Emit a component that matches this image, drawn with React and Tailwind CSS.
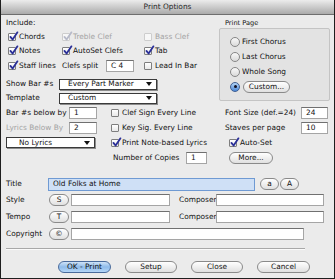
import React from "react";

function Box({ checked = false, disabled = false }) {
  return (
    <span
      className={
        disabled
          ? "relative w-[8px] h-[8px] shrink-0 rounded-[1px] border border-[#cdcdcd] bg-[#f7f7f7]"
          : "relative w-[8px] h-[8px] shrink-0 rounded-[1px] border border-[#7e7e7e] bg-gradient-to-b from-white to-[#e9e9e9]"
      }
    >
      {checked && (
        <svg viewBox="0 0 10 10" className="absolute left-[0px] top-[-2px] w-[9px] h-[9px] overflow-visible">
          <path
            d="M1.6 5.4 L4 8.4 L9.4 0.4"
            fill="none"
            stroke={disabled ? "#b7bac9" : "#2a2f98"}
            strokeWidth="2"
            strokeLinecap="round"
            strokeLinejoin="round"
          />
        </svg>
      )}
    </span>
  );
}

function CheckItem({ label, checked, disabled, className = "" }) {
  return (
    <div className={`flex items-center gap-[3px] whitespace-nowrap ${className}`}>
      <Box checked={checked} disabled={disabled} />
      <span className={disabled ? "text-[#a3a3a3]" : ""}>{label}</span>
    </div>
  );
}

function Radio({ checked = false }) {
  return checked ? (
    <span className="w-[10px] h-[10px] shrink-0 rounded-full border border-[#3f5f92] bg-gradient-to-b from-[#b3d4f6] to-[#4c88d6] flex items-center justify-center">
      <span className="w-[3px] h-[3px] rounded-full bg-[#101020]" />
    </span>
  ) : (
    <span className="w-[10px] h-[10px] shrink-0 rounded-full border border-[#868686] bg-gradient-to-b from-[#f8f8f8] to-[#dadada]" />
  );
}

function Field({ value = "", className = "" }) {
  return (
    <div className={`h-[12px] shrink-0 bg-white border border-[#a5a5a5] border-t-[#707070] flex items-center pl-[4px] ${className}`}>
      {value}
    </div>
  );
}

function Select({ value, className = "" }) {
  return (
    <div className={`h-[11px] shrink-0 bg-white border border-[#3a3a3a] shadow-[1px_1px_0_#8c8c8c] flex items-center justify-between pl-[8px] pr-[4px] ${className}`}>
      <span>{value}</span>
      <svg viewBox="0 0 6 4" className="w-[6px] h-[4px]">
        <path d="M0 0H6L3 4Z" fill="#111" />
      </svg>
    </div>
  );
}

function Pill({ children, blue = false, className = "" }) {
  return (
    <div
      className={`${
        blue
          ? "bg-gradient-to-b from-[#cfe3f8] via-[#8fbbea] to-[#b4d6f8] border-[#4a6b9c]"
          : "bg-gradient-to-b from-white to-[#e0e0e0] border-[#8a8a8a]"
      } h-[12px] shrink-0 rounded-full border flex items-center justify-center ${className}`}
    >
      {children}
    </div>
  );
}

export default function App() {
  return (
    <div className="w-[335px] h-[279px] flex flex-col bg-[#ebebeb] border-x border-b border-[#1e1e1e] overflow-hidden font-['DejaVu_Sans',sans-serif] text-[7.4px] leading-none text-[#111]">
      <div className="h-[15px] shrink-0 flex items-center justify-center bg-gradient-to-b from-[#ececec] to-[#ababab] border-b border-[#6e6e6e] text-[7.4px] text-[#262626]">
        Print Options
      </div>

      {/* top block */}
      <div className="flex">
        <div className="w-[218px] shrink-0 pl-[5px]">
          <div className="h-[15px] flex items-center">Include:</div>
          <div className="pl-[2px]">
            <div className="h-[13px] flex items-center">
              <CheckItem label="Chords" checked className="w-[54px]" />
              <CheckItem label="Treble Clef" checked disabled className="w-[82px]" />
              <CheckItem label="Bass Clef" disabled />
            </div>
            <div className="h-[15px] flex items-center">
              <CheckItem label="Notes" checked className="w-[54px]" />
              <CheckItem label="AutoSet Clefs" checked className="w-[82px]" />
              <CheckItem label="Tab" checked />
            </div>
            <div className="h-[15px] flex items-center">
              <CheckItem label="Staff lines" checked className="w-[54px]" />
              <div className="w-[82px] flex items-center">
                <span className="w-[44px]">Clefs split</span>
                <Field value="C 4" className="w-[28px]" />
              </div>
              <CheckItem label="Lead In Bar" />
            </div>
          </div>
          <div className="h-[4px]" />
          <div className="h-[14px] flex items-center">
            <span className="w-[53px]">Show Bar #s</span>
            <Select value="Every Part Marker" className="w-[98px]" />
          </div>
          <div className="h-[14px] flex items-center">
            <span className="w-[53px]">Template</span>
            <Select value="Custom" className="w-[98px]" />
          </div>
        </div>

        <div className="flex-1 pr-[4px] pt-[3px]">
          <div className="h-[10px] flex items-center pl-[6px] text-[6.6px]">Print Page</div>
          <div className="border border-[#c4c4c4] rounded-[2px] bg-[#e3e3e3] pl-[10px] pt-[5px] pb-[6px]">
            <div className="h-[15px] flex items-center gap-[2px]">
              <Radio />
              <span>First Chorus</span>
            </div>
            <div className="h-[15px] flex items-center gap-[2px]">
              <Radio />
              <span>Last Chorus</span>
            </div>
            <div className="h-[15px] flex items-center gap-[2px]">
              <Radio />
              <span>Whole Song</span>
            </div>
            <div className="h-[15px] flex items-center gap-[3px]">
              <Radio checked />
              <Pill className="w-[47px]">Custom...</Pill>
            </div>
          </div>
        </div>
      </div>

      {/* middle grid */}
      <div className="flex flex-col">
        <div className="h-[15px] flex items-center">
          <div className="w-[110px] pl-[5px] flex items-center">
            <span className="w-[63px]">Bar #s below by</span>
            <Field value="1" className="w-[28px]" />
          </div>
          <CheckItem label="Clef Sign Every Line" className="w-[114px]" />
          <div className="flex items-center">
            <span className="w-[76px]">Font Size (def.=24)</span>
            <Field value="24" className="w-[27px]" />
          </div>
        </div>
        <div className="h-[15px] flex items-center">
          <div className="w-[110px] pl-[5px] flex items-center">
            <span className="w-[63px] text-[#a3a3a3]">Lyrics Below By</span>
            <Field value="2" className="w-[28px]" />
          </div>
          <CheckItem label="Key Sig. Every Line" className="w-[114px]" />
          <div className="flex items-center">
            <span className="w-[76px]">Staves per page</span>
            <Field value="10" className="w-[27px]" />
          </div>
        </div>
        <div className="h-[15px] flex items-center">
          <div className="w-[110px] pl-[5px] flex items-center">
            <Select value="No Lyrics" className="w-[89px] pl-[12px]" />
          </div>
          <CheckItem label="Print Note-based Lyrics" checked className="w-[114px]" />
          <CheckItem label="Auto-Set" checked className="pl-[4px]" />
        </div>
        <div className="h-[15px] flex items-center">
          <div className="w-[110px]" />
          <div className="w-[114px] pl-[2px] flex items-center">
            <span className="w-[73px]">Number of Copies</span>
            <Field value="1" className="w-[21px]" />
          </div>
          <Pill className="w-[44px] ml-[4px]">More...</Pill>
        </div>
      </div>

      {/* titles */}
      <div className="flex flex-col pl-[5px] mt-[12px]">
        <div className="h-[14px] flex items-center">
          <span className="w-[42px]">Title</span>
          <div className="w-[207px] h-[13px] bg-[#cfe0f6] border border-[#6f9ad3] flex items-center pl-[4px]">
            Old Folks at Home
          </div>
          <Pill className="w-[19px] ml-[5px]">a</Pill>
          <Pill className="w-[19px] ml-[1px]">A</Pill>
        </div>
        <div className="h-[14px] flex items-center mt-[2px]">
          <span className="w-[43px]">Style</span>
          <Pill className="w-[20px]">S</Pill>
          <Field className="w-[99px] ml-[2px]" />
          <span className="w-[46px] pl-[9px]">Composer</span>
          <Field className="w-[108px]" />
        </div>
        <div className="h-[14px] flex items-center mt-[3px]">
          <span className="w-[43px]">Tempo</span>
          <Pill className="w-[20px]">T</Pill>
          <Field className="w-[99px] ml-[2px]" />
          <span className="w-[46px] pl-[9px]">Composer2</span>
          <Field className="w-[108px]" />
        </div>
        <div className="h-[14px] flex items-center mt-[3px]">
          <span className="w-[43px]">Copyright</span>
          <Pill className="w-[20px]">©</Pill>
          <Field className="w-[233px] ml-[2px]" />
        </div>
      </div>

      <div className="ml-[5px] mt-[7px] w-[299px] h-px bg-[#a8a8a8] shadow-[0_1px_0_#fafafa]" />

      <div className="flex items-center gap-[14px] pl-[57px] mt-[12px]">
        <Pill blue className="w-[53px]">OK - Print</Pill>
        <Pill className="w-[52px]">Setup</Pill>
        <Pill className="w-[52px]">Close</Pill>
        <Pill className="w-[53px]">Cancel</Pill>
      </div>
    </div>
  );
}
